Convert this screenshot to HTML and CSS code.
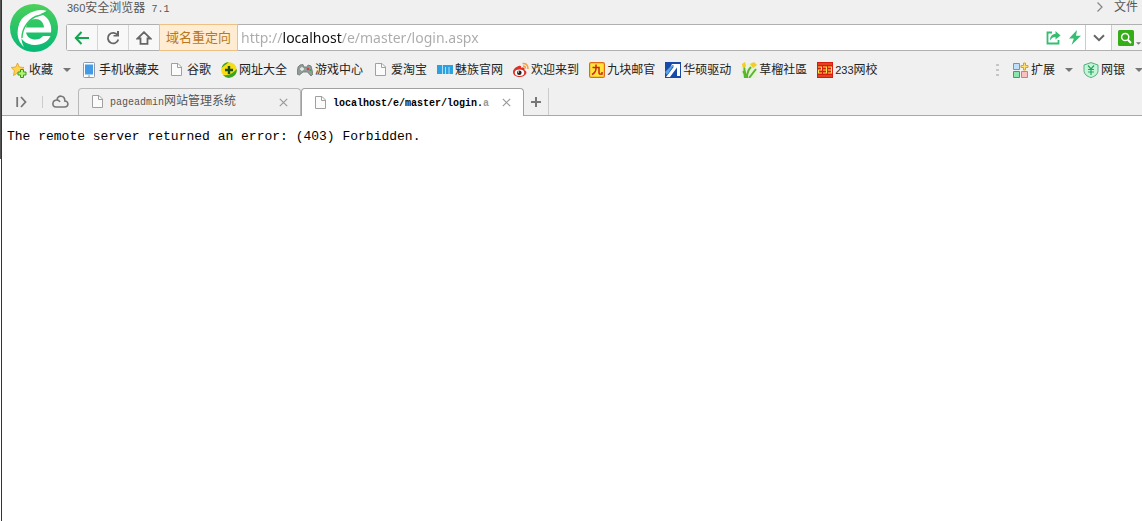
FILE: index.html
```html
<!DOCTYPE html>
<html lang="zh-CN">
<head>
<meta charset="utf-8">
<title>360安全浏览器 7.1</title>
<link rel="stylesheet" href="styles.css">
</head>
<body>
<svg class="sprite" aria-hidden="true">
  <symbol id="page" viewBox="0 0 16 16"><path d="M2.500 1.500h6.500l3.500 3.500v8.500h-10z" fill="#fbfbfb" stroke="#a0a0a0"/><path d="M8.500 1.500v4h4" fill="none" stroke="#a0a0a0"/></symbol>
  <symbol id="close" viewBox="0 0 9 9"><path d="M.8.8l7.400 7.400M8.200.8L.8 8.200" fill="none" stroke="#999" stroke-width="1.200"/></symbol>
  <symbol id="caret" viewBox="0 0 8 4"><path d="M0 0h8L4 4z" fill="#777"/></symbol>
</svg>
<div class="edge"></div>
<div class="window">
  <header class="head">
    <svg class="logo" viewBox="0 0 48 48" role="img" aria-label="360">
      <defs><linearGradient id="g" x1="0" y1="0" x2="0" y2="1"><stop offset="0" stop-color="#4cd05a"/><stop offset="1" stop-color="#05b877"/></linearGradient></defs>
      <circle cx="24" cy="24" r="24" fill="url(#g)"/>
      <path d="M16 28.500H41C42.500 17 35 9 25.500 9C15 9 8.500 16 8.500 25C8.500 34.500 15.500 41 25 41C32.500 41 38 37.500 40.500 32H33C31 34.500 28.500 35.500 25.500 35.500C20.500 35.500 17 33 16 28.500zM16 23.500C17 18 20.500 15 25.500 15C30.500 15 33.500 18 34 23.500z" fill="#fff" fill-rule="evenodd"/>
      <path d="M37 7C29 4 17 8 11 17C6 25 6 36 14 43C10 36 11 29 15 22C20 13 29 11 37 7z" fill="#fff"/>
      <path d="M12 34C12 23 20 13.500 29 11.500C33 10.500 36 9 37.500 7" fill="none" stroke="#30c765" stroke-width="1.400"/>
    </svg>
    <div class="headmain">
      <div class="titlebar">
        <h1 class="title"><span class="digits">360</span>安全浏览器<span class="latin"> 7.1</span></h1>
        <nav class="menu">
          <svg width="8" height="10" viewBox="0 0 8 10"><path d="M1.500.5L6 5L1.500 9.500" fill="none" stroke="#888" stroke-width="1.300"/></svg>
          <button class="plain" type="button">文件</button>
        </nav>
      </div>
      <form class="address">
        <button class="nav" type="button" aria-label="后退"><svg width="16" height="14" viewBox="0 0 16 14"><path d="M7.500 1L1.800 7l5.700 6M2 7h13" fill="none" stroke="#12a650" stroke-width="2"/></svg></button>
        <button class="nav" type="button" aria-label="刷新"><svg width="14" height="14" viewBox="0 0 14 14"><path d="M11.500 4A5.300 5.300 0 1 0 12.300 8.500" fill="none" stroke="#666" stroke-width="1.800"/><path d="M13 0v5.500H7.500V4H11V0z" fill="#666"/></svg></button>
        <button class="nav" type="button" aria-label="主页"><svg width="16" height="14" viewBox="0 0 16 14"><path d="M8 1.200L1.500 7.500H4.500V12.800H11.500V7.500H14.500z" fill="none" stroke="#666" stroke-width="1.800"/></svg></button>
        <button class="tag" type="button">域名重定向</button>
        <input class="url" type="text" aria-label="地址" value="http://localhost/e/master/login.aspx">
        <button class="tool" type="button" aria-label="分享"><svg width="15" height="14" viewBox="0 0 15 14"><path d="M6 1.500H1.500V12.500H12.500V9" fill="none" stroke="#35bd72" stroke-width="1.800"/><path d="M9.500 0L14.500 4.500L9.500 8.500V6C7 6 5.500 7 4 9.500C4 5.500 6 3 9.500 3z" fill="#35bd72"/></svg></button>
        <button class="tool" type="button" aria-label="极速模式"><svg width="12" height="15" viewBox="0 0 12 15"><path d="M8 0L0 8.500H4.800L2.500 15L12 5.800H7z" fill="#35bd72"/></svg></button>
        <button class="drop" type="button" aria-label="展开"><svg width="12" height="8" viewBox="0 0 12 8"><path d="M1 1.200L6 6.200L11 1.200" fill="none" stroke="#666" stroke-width="2"/></svg></button>
        <button class="search" type="button" aria-label="搜索"><svg width="16" height="16" viewBox="0 0 16 16"><rect width="16" height="16" rx="1.500" fill="#35ac18"/><circle cx="7.200" cy="7" r="3.600" fill="none" stroke="#fff" stroke-width="1.500"/><path d="M9.800 9.800L13 13" stroke="#fff" stroke-width="2"/></svg><svg class="mini" width="5" height="3"><use href="#caret"/></svg></button>
      </form>
    </div>
  </header>

  <nav class="bookmarks">
    <button class="mark" type="button"><svg viewBox="0 0 16 16"><path d="M6.500 1L8.300 5L13 5.500L9.500 8.800L10.500 13.500L6.500 11L2.500 13.500L3.400 8.800L.3 5.500L4.800 5z" fill="#ffd450" stroke="#df9d20" stroke-width=".8"/><path d="M9.500 7.500h3v2.500H15v3h-2.500v2.500h-3V13H7v-3h2.500z" fill="#b4f178" stroke="#379b20"/></svg>收藏</button>
    <button class="more" type="button" aria-label="更多收藏"><svg width="8" height="4"><use href="#caret"/></svg></button>
    <a class="mark" href="#"><svg viewBox="0 0 16 16"><rect x="2.500" y=".5" width="11" height="15" rx="1" fill="#fff" stroke="#9099a5"/><rect x="4" y="2.500" width="8" height="10" fill="#419be8"/><path d="M7 14h2" stroke="#888"/></svg>手机收藏夹</a>
    <a class="mark" href="#"><svg><use href="#page"/></svg>谷歌</a>
    <a class="mark" href="#"><svg viewBox="0 0 16 16"><circle cx="8" cy="8" r="7.800" fill="#f8dc14"/><path d="M.5 6A7.800 7.800 0 0 1 8 .2C5 2 3 4 .5 6zM2 13C8 14 12 11 15.700 7A7.800 7.800 0 0 1 2 13z" fill="#35a52a"/><path d="M8 4v8M4 8h8" stroke="#174f14" stroke-width="2.400"/></svg>网址大全</a>
    <a class="mark" href="#"><svg viewBox="0 0 16 16"><path d="M3 3L6 2.500L7 5H10L11 3L14 4L16 12L14 14L10.500 10H6L2.500 13L0 12L1 5z" fill="#919d99" stroke="#68736f" stroke-width=".8"/><path d="M3 7h4M5 5v4" stroke="#eee" stroke-width="1.300"/><circle cx="11" cy="7" r="1.300" fill="#d53c3c"/><circle cx="13.500" cy="8" r="1.100" fill="#39a159"/></svg>游戏中心</a>
    <a class="mark" href="#"><svg><use href="#page"/></svg>爱淘宝</a>
    <a class="mark" href="#"><svg viewBox="0 0 16 16"><path d="M0 3h16v9H0z" fill="#2ca1df"/><path d="M5.500 3v9M8.500 5v7M12 5v7" stroke="#d2efff" stroke-width=".8"/></svg>魅族官网</a>
    <a class="mark" href="#"><svg viewBox="0 0 16 16"><path d="M5.500 4C8 3 8.500 4.500 8 6C11 5 12 6 11.500 8C16 10 12 15 7 15C2 15 0 12.500 0 10C0 7.500 3 4.800 5.500 4z" fill="#de3027"/><ellipse cx="6.500" cy="10.700" rx="4.700" ry="3.200" fill="#fff"/><circle cx="6.300" cy="10.700" r="2.300" fill="#222"/><circle cx="5.500" cy="10" r=".7" fill="#fff"/><path d="M9.500 1.500Q15 1 15 7M10 4Q12.500 4 12.500 6.500" fill="none" stroke="#f5a13c" stroke-width="1.500"/></svg>欢迎来到</a>
    <a class="mark" href="#"><svg viewBox="0 0 16 16"><rect x=".6" y=".6" width="14.800" height="14.800" rx="1.500" fill="#ffe43b" stroke="#e16b12" stroke-width="1.200"/><path d="M3.500 5.500H10V11Q10 12.500 13 12V10M7 2.500V6Q7 10.500 3 12.500" fill="none" stroke="#ca2414" stroke-width="1.500"/></svg>九块邮官</a>
    <a class="mark" href="#"><svg viewBox="0 0 16 16"><path d="M0 0h16v16H0z" fill="#174ba7"/><path d="M7 2h8v12h-3V5.500L5 15H1L9 4.500H5.500z" fill="#fff"/><path d="M0 10L7 3h2L2 13z" fill="#5ba1e3"/></svg>华硕驱动</a>
    <a class="mark" href="#"><svg viewBox="0 0 16 16"><path d="M0 1h16v15H0z" fill="#e6f4da"/><path d="M3 5L5 16M6 16Q6 9 10 5M8 16L15 7M2 9Q4 11 4 16" fill="none" stroke="#5bb62e" stroke-width="2"/><path d="M1 2l3-2 1 4-3 3zM9 2l4-2 3 3-4 3z" fill="#f6cb28"/></svg>草榴社區</a>
    <a class="mark" href="#"><svg viewBox="0 0 16 16"><path d="M0 0h16v16H0z" fill="#d61b10"/><path d="M1 2h14M1 14h14" stroke="#ed6b30"/><path d="M1 5H4.500V8H1.500V11H5M6 5H9.500V11H6M6 8H9.500M11 5H14.500V11H11M11 8H14.500" fill="none" stroke="#ffe448" stroke-width="1.100"/></svg><span><span class="digits">233</span>网校</span></a>
    <div class="extras">
      <svg class="dots" width="3" height="14" viewBox="0 0 3 14"><path d="M0 1h3v2H0zM0 6h3v2H0zM0 11h3v2H0z" fill="#c6c6c6"/></svg>
      <button class="mark" type="button"><svg viewBox="0 0 16 16"><path d="M.5 1.500h6v6h-6z" fill="#bfe0fa" stroke="#5a9bd0"/><path d="M.5 9.500h6v6h-6z" fill="#8be5ac" stroke="#30a760"/><path d="M8.500 9.500h6v6h-6z" fill="#fac0c0" stroke="#df7676"/><path d="M10.500 1h2v2.500H15v2h-2.500V8h-2V5.500H8v-2h2.500z" fill="#ffe071" stroke="#e69c22"/></svg>扩展</button>
      <button class="more" type="button" aria-label="更多扩展"><svg width="8" height="4"><use href="#caret"/></svg></button>
      <button class="mark" type="button"><svg viewBox="0 0 16 16"><path d="M8 .6L15 3V8.500C15 12 12 14.500 8 15.500C4 14.500 1 12 1 8.500V3z" fill="#c5f5d8" stroke="#4fae7d"/><path d="M5 3.500L8 7L11 3.500M5 7.500h6M5 10h6M8 7v6" fill="none" stroke="#26a75f" stroke-width="1.200"/></svg>网银</button>
      <button class="more last" type="button" aria-label="更多网银"><svg width="8" height="4"><use href="#caret"/></svg></button>
    </div>
  </nav>

  <div class="tabs">
    <button class="side" type="button" aria-label="侧边栏"><svg width="12" height="12" viewBox="0 0 12 12"><path d="M1.200 1v10M5 1L9.500 6L5 11" fill="none" stroke="#777" stroke-width="1.800"/></svg></button>
    <button class="cloud" type="button" aria-label="云同步"><svg width="17" height="13" viewBox="0 0 17 13"><path d="M4 12H12.500C17 12 17 6 12.800 6C13 0 5.500-.5 5 5C0 5-.5 12 4 12zM5 5Q7 5 8 7" fill="none" stroke="#777" stroke-width="1.600"/></svg></button>
    <div class="tab">
      <svg class="icon"><use href="#page"/></svg>
      <a class="label" href="#"><span class="latin">pageadmin</span>网站管理系统</a>
      <button class="plain" type="button" aria-label="关闭"><svg width="9" height="9"><use href="#close"/></svg></button>
    </div>
    <div class="tab active">
      <svg class="icon"><use href="#page"/></svg>
      <a class="label" href="#"><span class="latin">localhost/e/master/login.<span class="fade">a</span></span></a>
      <button class="plain" type="button" aria-label="关闭"><svg width="9" height="9"><use href="#close"/></svg></button>
    </div>
    <button class="add" type="button" aria-label="新标签"><svg width="10" height="10" viewBox="0 0 10 10"><path d="M5 0v10M0 5h10" stroke="#777" stroke-width="2"/></svg></button>
  </div>

  <main class="content">The remote server returned an error: (403) Forbidden.</main>
</div>
</body>
</html>
```
FILE: styles.css
```css
* { box-sizing: border-box; }
body {
  margin: 0;
  display: flex;
  min-height: 100vh;
  overflow-x: hidden;
  background: #fff;
  color: #222;
  font: 12px/16px "Liberation Sans", "Noto Sans CJK SC", sans-serif;
}
button {
  margin: 0;
  padding: 0;
  border: 0;
  background: none;
  color: inherit;
  font: inherit;
  cursor: pointer;
}
a { color: inherit; text-decoration: none; }
svg { display: block; flex: none; }
.sprite { position: absolute; width: 0; height: 0; }
.latin { font-family: "Liberation Mono", monospace; font-size: 10px; white-space: pre; }
.digits { font-size: 11px; }
.edge {
  flex: none;
  width: 2px;
  border-right: 1px solid #333;
  background: linear-gradient(#555 159px, #fff 159px);
}
.window { flex: 1; min-width: 0; }

.head {
  display: flex;
  gap: 8px;
  padding-left: 8px;
  background: #f0f0f0;
}
.logo { width: 48px; height: 48px; margin-top: 4px; }
.headmain { flex: 1; min-width: 0; }
.titlebar {
  display: flex;
  justify-content: space-between;
  height: 24px;
  padding-right: 4px;
  color: #555;
}
.title { margin: 0; padding-left: 1px; font-size: 12px; font-weight: 400; }
.menu { display: flex; gap: 10px; height: 13px; align-items: center; }
.address {
  display: flex;
  height: 27px;
  border: 1px solid #b0b0b0;
  border-right: 0;
  border-radius: 3px 0 0 3px;
  background: #fff;
}
.address button { display: flex; align-items: center; justify-content: center; }
.address .nav { width: 31px; border-right: 1px solid #d5d5d5; background: #f8f8f8; }
.address .tag {
  width: 79px;
  margin: -1px 0 -1px -1px;
  border: 1px solid #edc183;
  background: #ffecd2;
  color: #b87820;
  font-size: 13px;
}
.url {
  flex: 1;
  min-width: 0;
  padding: 0 0 0 3px;
  border: 0;
  outline: 0;
  background: linear-gradient(90deg, #aaa 45px, #111 45px, #111 104px, #aaa 104px);
  background-clip: text;
  color: transparent;
  font: 14px/20px "Noto Sans", sans-serif;
}
.address .tool { width: 21px; }
.address .drop { width: 26px; border-left: 1px solid #ccc; }
.address .search { gap: 2px; width: 31px; padding-left: 5px; border-left: 1px solid #ccc; background: #f4f4f4; }
.mini { margin-top: 12px; }

.bookmarks {
  display: flex;
  align-items: center;
  height: 36px;
  padding-left: 9px;
  background: #f0f0f0;
  white-space: nowrap;
}
.mark { display: flex; align-items: center; gap: 2px; }
.mark svg { width: 16px; height: 16px; }
.mark + .mark { margin-left: 10px; }
.more { width: 28px; height: 16px; padding-left: 10px; }
.more.last { width: 17px; overflow: hidden; }
.extras { display: flex; align-items: center; margin-left: auto; }
.dots { margin-right: 14px; }

.tabs {
  display: flex;
  height: 28px;
  border-bottom: 1px solid #a8a8a8;
  background: #f0f0f0;
}
.side, .cloud, .add { display: flex; align-items: center; justify-content: center; }
.side { width: 40px; }
.cloud {
  width: 36px;
  background: linear-gradient(#ccc, #ccc) 0 center / 1px 12px no-repeat;
}
.tab {
  display: flex;
  align-items: center;
  width: 223px;
  padding: 0 12px 0 11px;
  border: 1px solid #b8b8b8;
  border-bottom: 0;
  border-radius: 4px 4px 0 0;
  color: #555;
}
.tab .icon { width: 16px; height: 16px; }
.label { flex: 1; min-width: 0; padding-left: 4px; white-space: nowrap; }
.active {
  margin-bottom: -1px;
  border-color: #a0a0a0;
  background: #fff;
  color: #000;
  font-weight: 700;
}
.fade { color: #999; }
.add { width: 25px; border-right: 1px solid #ccc; }

.content {
  padding: 13px 5px;
  color: #000;
  font: 13px/16px "Liberation Mono", monospace;
}
```
